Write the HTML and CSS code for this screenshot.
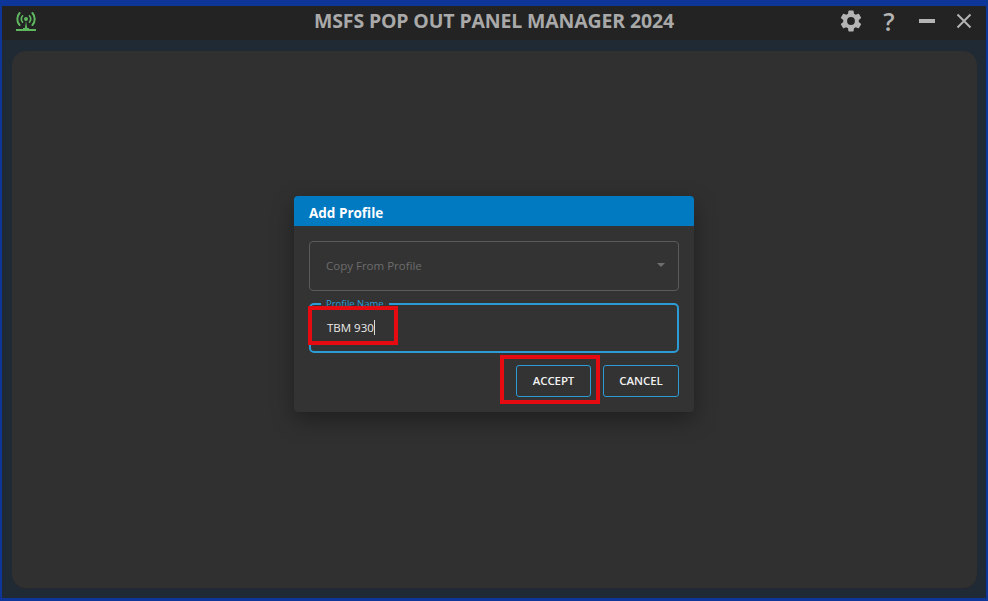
FILE: index.html
```html
<!DOCTYPE html>
<html lang="en">
<head>
<meta charset="utf-8">
<title>MSFS Pop Out Panel Manager 2024</title>
<link rel="stylesheet" href="styles.css">
</head>
<body>
<div class="window">
  <header class="titlebar">
    <svg class="logo" width="22" height="22" viewBox="0 0 22 22" fill="none" stroke="#5fb760" stroke-linecap="round">
      <circle cx="11" cy="8" r="2" fill="#5fb760" stroke="none"/>
      <path d="M7.6 4.8a5 5 0 0 0 0 6.4M14.4 4.8a5 5 0 0 1 0 6.4" stroke-width="1.6"/>
      <path d="M4.6 2a9 9 0 0 0 0 12M17.4 2a9 9 0 0 1 0 12" stroke-width="2"/>
      <path d="M11 10l-1.3 8h2.6z" fill="#5fb760" stroke="none"/>
      <path d="M1 19h20" stroke-width="2" stroke-linecap="butt"/>
      <path d="M8 18.5h6" stroke-width="3" stroke-linecap="butt"/>
    </svg>
    <h1 class="title">MSFS POP OUT PANEL MANAGER 2024</h1>
    <div class="controls">
      <svg class="gear" width="26" height="26" viewBox="0 0 24 24" fill="#b4b4b4">
        <path d="M19.14 12.94c.04-.3.06-.61.06-.94s-.02-.64-.07-.94l2.03-1.58a.49.49 0 0 0 .12-.61l-1.92-3.32a.49.49 0 0 0-.59-.22l-2.39.96a7 7 0 0 0-1.62-.94l-.36-2.54a.48.48 0 0 0-.48-.41h-3.84a.48.48 0 0 0-.47.41l-.36 2.54a7.2 7.2 0 0 0-1.62.94l-2.39-.96a.48.48 0 0 0-.59.22L2.74 8.87a.47.47 0 0 0 .12.61l2.03 1.58c-.05.3-.09.63-.09.94s.02.64.07.94l-2.03 1.58a.49.49 0 0 0-.12.61l1.92 3.32c.12.22.37.29.59.22l2.39-.96c.5.38 1.03.7 1.62.94l.36 2.54c.05.24.24.41.48.41h3.84c.24 0 .44-.17.47-.41l.36-2.54a7 7 0 0 0 1.62-.94l2.39.96c.22.08.47 0 .59-.22l1.92-3.32a.47.47 0 0 0-.12-.61l-2.01-1.58zM12 15.6a3.6 3.6 0 1 1 0-7.2 3.6 3.6 0 0 1 0 7.2z"/>
      </svg>
      <span class="help">?</span>
      <span class="minimize"></span>
      <svg class="close" width="16" height="16" viewBox="0 0 16 16" stroke="#b4b4b4" stroke-width="2" fill="none">
        <path d="M1.5 1.5l13 13M14.5 1.5l-13 13"/>
      </svg>
    </div>
  </header>
  <main class="content">
    <div class="card"></div>
  </main>

  <section class="dialog">
    <div class="dialog-head">Add Profile</div>
    <div class="dialog-body">
      <div class="select">
        <span class="select-text">Copy From Profile</span>
        <i class="caret"></i>
      </div>
      <div class="field">
        <span class="field-label">Profile Name</span>
        <span class="field-value">TBM 930</span><i class="text-cursor"></i>
      </div>
      <div class="actions">
        <button class="btn">ACCEPT</button>
        <button class="btn">CANCEL</button>
      </div>
    </div>
  </section>

  <div class="mark mark-name"></div>
  <div class="mark mark-accept"></div>
</div>
</body>
</html>
```

FILE: styles.css
```css
* { box-sizing: border-box; }

html, body {
  margin: 0;
  height: 100%;
  overflow: hidden;
}

body {
  font-family: "Open Sans", "Noto Sans", sans-serif;
  background: #0e3598;
}

.window {
  position: relative;
  width: 988px;
  height: 601px;
  padding: 6px 2px 3px 2px;
  display: flex;
  flex-direction: column;
}

.titlebar {
  flex: 0 0 34px;
  background: #232323;
  position: relative;
  display: flex;
  justify-content: center;
}

.logo {
  position: absolute;
  left: 13px;
  top: 5px;
}

.title {
  margin: 0;
  color: #a9a9a9;
  font-size: 19.5px;
  line-height: 30px;
  font-weight: 700;
  letter-spacing: -0.15px;
  white-space: nowrap;
}

.controls {
  position: absolute;
  right: 14px;
  top: 0;
  height: 30px;
  display: flex;
  align-items: center;
}

.gear {
  margin-right: 17px;
}

.help {
  color: #b4b4b4;
  font-size: 25px;
  font-weight: 600;
  line-height: 30px;
  width: 16px;
  text-align: center;
  margin-right: 22px;
}

.minimize {
  width: 16px;
  height: 4px;
  background: #b4b4b4;
  margin-right: 21px;
}

.content {
  flex: 1;
  background: #1f2a35;
  padding: 11px 9px 9px 10px;
  display: flex;
}

.card {
  flex: 1;
  background: #303030;
  border-radius: 14px;
  box-shadow: inset 0 -1px 0 #262630;
}

.dialog {
  position: absolute;
  left: 294px;
  top: 196px;
  width: 400px;
  height: 216px;
  background: #333;
  border-radius: 4px;
  box-shadow: 0 8px 22px rgba(0, 0, 0, 0.35);
  display: flex;
  flex-direction: column;
}

.dialog-head {
  height: 30px;
  flex: none;
  padding: 4px 0 0 15px;
  background: #017ac2;
  border-radius: 4px 4px 0 0;
  color: #fff;
  font-size: 13.5px;
  font-weight: 700;
  line-height: 26px;
}

.dialog-body {
  flex: 1;
  padding: 15px;
  display: flex;
  flex-direction: column;
}

.select {
  height: 50px;
  border: 1px solid #5a5a5a;
  border-radius: 4px;
  display: flex;
  align-items: center;
  justify-content: space-between;
  padding: 0 13px 2px 16px;
  color: #6c6c6c;
  font-size: 11.5px;
}

.caret {
  width: 0;
  height: 0;
  border-left: 4px solid transparent;
  border-right: 4px solid transparent;
  border-top: 4px solid #6e6e6e;
}

.field {
  position: relative;
  height: 50px;
  margin-top: 12px;
  border: 2px solid #2c9bd6;
  border-radius: 5px;
  display: flex;
  align-items: center;
  padding: 0 0 2px 16px;
  color: #eaeaea;
  font-size: 11.5px;
}

.field-label {
  position: absolute;
  left: 10px;
  top: -7px;
  padding: 0 5px;
  background: #333;
  color: #2c9bd6;
  font-size: 9.5px;
  line-height: 11px;
}

.text-cursor {
  width: 1px;
  height: 15px;
  background: #dcdcdc;
}

.actions {
  margin-top: 12px;
  display: flex;
  justify-content: flex-end;
  gap: 12px;
}

.btn {
  height: 32px;
  width: 76px;
  padding: 0 0 2px;
  background: #333;
  border: 1px solid #2c9bd6;
  border-radius: 3px;
  color: #f0f0f0;
  font-family: inherit;
  font-size: 11.5px;
  font-weight: 600;
  letter-spacing: -0.1px;
}

.btn:first-child {
  width: 75px;
}

.mark {
  position: absolute;
  border: 4px solid #e60b10;
}

.mark-name {
  left: 308px;
  top: 306px;
  width: 90px;
  height: 39px;
}

.mark-accept {
  left: 500px;
  top: 355px;
  width: 100px;
  height: 49px;
}
```
